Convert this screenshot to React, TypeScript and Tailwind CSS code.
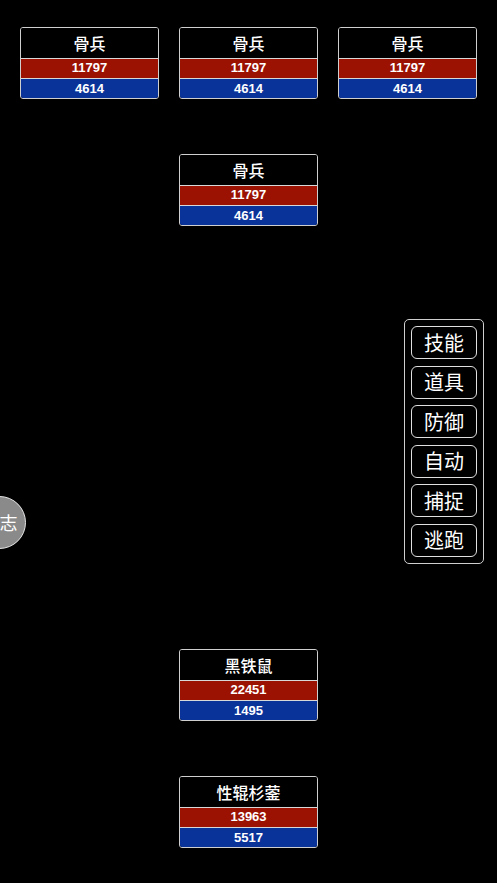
const FONT = '"Noto Sans CJK SC", "Liberation Sans", sans-serif';
const NUM = '"Liberation Sans", "Noto Sans CJK SC", sans-serif';

type Unit = { name: string; hp: number; mp: number };

const enemies: Unit[] = [
  { name: '骨兵', hp: 11797, mp: 4614 },
  { name: '骨兵', hp: 11797, mp: 4614 },
  { name: '骨兵', hp: 11797, mp: 4614 },
];

const actions = ['技能', '道具', '防御', '自动', '捕捉', '逃跑'];

function UnitCard({ unit }: { unit: Unit }) {
  return (
    <div className="w-[139px] h-[72px] border border-[#cfcfcf] rounded-[3px] overflow-hidden flex flex-col text-white">
      <div className="h-[31px] bg-black flex items-center justify-center text-[16px] font-medium border-b border-[#d8d8d8]">
        {unit.name}
      </div>
      <div
        className="h-[20px] bg-[#9b1203] flex items-center justify-center text-[13px] font-bold border-b border-[#d8d8d8]"
        style={{ fontFamily: NUM }}
      >
        {unit.hp}
      </div>
      <div
        className="flex-1 bg-[#0a3399] flex items-center justify-center text-[13px] font-bold"
        style={{ fontFamily: NUM }}
      >
        {unit.mp}
      </div>
    </div>
  );
}

export default function App() {
  return (
    <div className="relative w-[497px] h-[883px] bg-black overflow-hidden" style={{ fontFamily: FONT }}>
      <div className="flex flex-col items-center pt-[27px]">
        <div className="flex gap-[20px]">
          {enemies.map((u, i) => (
            <UnitCard key={i} unit={u} />
          ))}
        </div>
        <div className="mt-[55px]">
          <UnitCard unit={{ name: '骨兵', hp: 11797, mp: 4614 }} />
        </div>
        <div className="mt-[423px]">
          <UnitCard unit={{ name: '黑铁鼠', hp: 22451, mp: 1495 }} />
        </div>
        <div className="mt-[55px]">
          <UnitCard unit={{ name: '性辊杉蓥', hp: 13963, mp: 5517 }} />
        </div>
      </div>

      {/* action menu */}
      <div className="absolute left-[404px] top-[319px] w-[80px] h-[245px] border border-[#cfcfcf] rounded-[5px] flex flex-col items-center gap-[6.6px] pt-[6px]">
        {actions.map((a) => (
          <button
            key={a}
            className="w-[66px] h-[33px] border border-[#e0e0e0] rounded-[6px] text-white text-[20px] leading-none flex items-center justify-center"
          >
            {a}
          </button>
        ))}
      </div>

      {/* log button, mostly off the left edge */}
      <div className="absolute left-[-27px] top-[496px] w-[53px] h-[53px] rounded-full bg-[#8a8a8a] border border-[#e6e6e6] flex items-center justify-center text-white text-[18px]">
        日志
      </div>
    </div>
  );
}
